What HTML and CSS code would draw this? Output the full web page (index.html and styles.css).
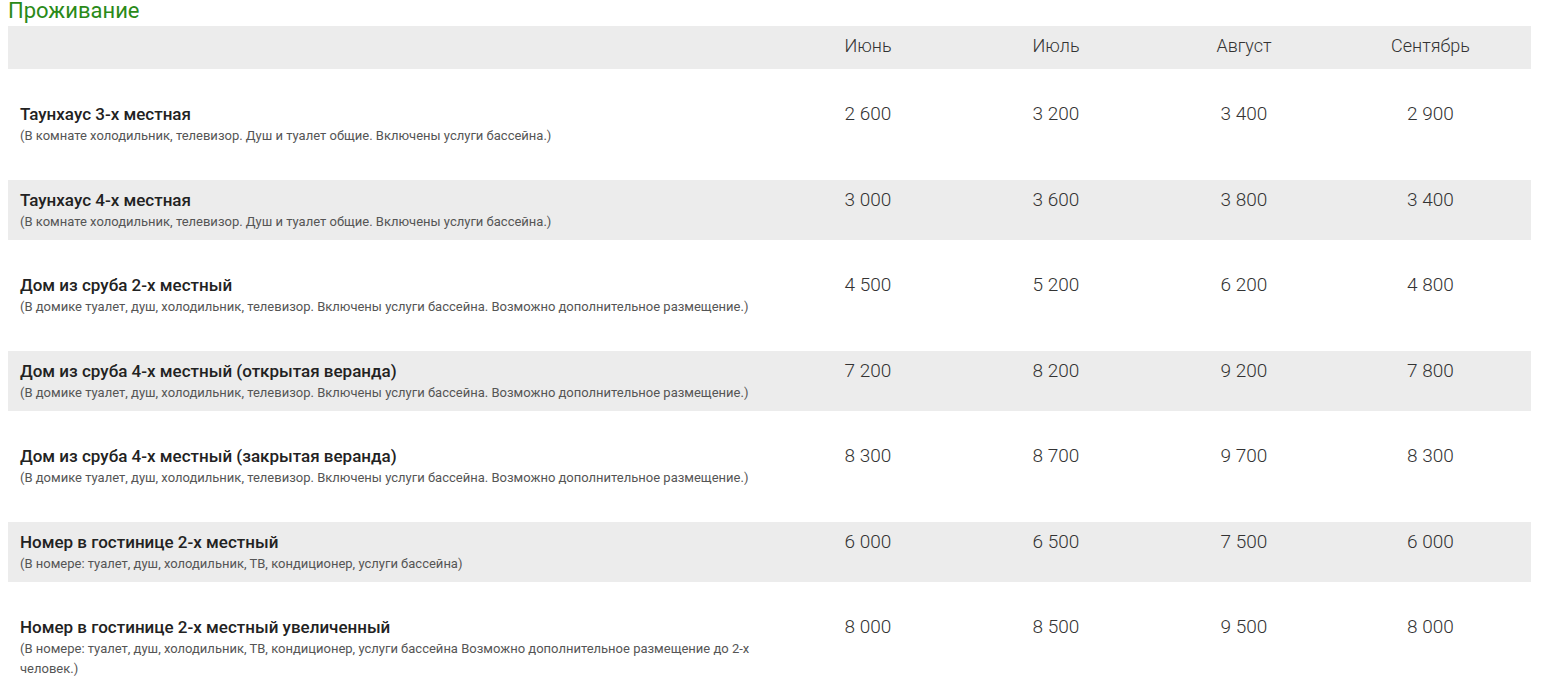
FILE: index.html
```html
<!DOCTYPE html>
<html lang="ru">
<head>
<meta charset="utf-8">
<title>Проживание</title>
<link rel="stylesheet" href="styles.css">
</head>
<body>
<h2 class="title">Проживание</h2>
<table class="prices">
  <colgroup>
    <col class="col-name">
    <col class="col-month">
    <col class="col-month">
    <col class="col-month">
    <col class="col-month-last">
  </colgroup>
  <thead>
    <tr>
      <th class="th-name"></th>
      <th>Июнь</th>
      <th>Июль</th>
      <th>Август</th>
      <th class="last">Сентябрь</th>
    </tr>
  </thead>
  <tbody>
    <tr class="row-light">
      <td class="name-cell"><div class="name">Таунхаус 3-х местная</div><div class="desc">(В комнате холодильник, телевизор. Душ и туалет общие. Включены услуги бассейна.)</div></td>
      <td>2 600</td><td>3 200</td><td>3 400</td><td class="last">2 900</td>
    </tr>
    <tr class="row-grey">
      <td class="name-cell"><div class="name">Таунхаус 4-х местная</div><div class="desc">(В комнате холодильник, телевизор. Душ и туалет общие. Включены услуги бассейна.)</div></td>
      <td>3 000</td><td>3 600</td><td>3 800</td><td class="last">3 400</td>
    </tr>
    <tr class="row-light">
      <td class="name-cell"><div class="name">Дом из сруба 2-х местный</div><div class="desc">(В домике туалет, душ, холодильник, телевизор. Включены услуги бассейна. Возможно дополнительное размещение.)</div></td>
      <td>4 500</td><td>5 200</td><td>6 200</td><td class="last">4 800</td>
    </tr>
    <tr class="row-grey">
      <td class="name-cell"><div class="name">Дом из сруба 4-х местный (открытая веранда)</div><div class="desc">(В домике туалет, душ, холодильник, телевизор. Включены услуги бассейна. Возможно дополнительное размещение.)</div></td>
      <td>7 200</td><td>8 200</td><td>9 200</td><td class="last">7 800</td>
    </tr>
    <tr class="row-light">
      <td class="name-cell"><div class="name">Дом из сруба 4-х местный (закрытая веранда)</div><div class="desc">(В домике туалет, душ, холодильник, телевизор. Включены услуги бассейна. Возможно дополнительное размещение.)</div></td>
      <td>8 300</td><td>8 700</td><td>9 700</td><td class="last">8 300</td>
    </tr>
    <tr class="row-grey">
      <td class="name-cell"><div class="name">Номер в гостинице 2-х местный</div><div class="desc">(В номере: туалет, душ, холодильник, ТВ, кондиционер, услуги бассейна)</div></td>
      <td>6 000</td><td>6 500</td><td>7 500</td><td class="last">6 000</td>
    </tr>
    <tr class="row-light">
      <td class="name-cell"><div class="name">Номер в гостинице 2-х местный увеличенный</div><div class="desc desc-wrap">(В номере: туалет, душ, холодильник, ТВ, кондиционер, услуги бассейна Возможно дополнительное размещение до 2-х человек.)</div></td>
      <td>8 000</td><td>8 500</td><td>9 500</td><td class="last">8 000</td>
    </tr>
  </tbody>
</table>
</body>
</html>
```
FILE: styles.css
```css
html, body {
  background: #ffffff;
}
body {
  margin: 0 8px;
  font-family: "Roboto", "Liberation Sans", sans-serif;
  color: #2b2b2b;
}
.title {
  margin: 0 0 5px 0;
  font-size: 22px;
  line-height: 21px;
  font-weight: 400;
  color: #2a8a18;
  height: 21px;
}
.prices {
  border-collapse: collapse;
  border-spacing: 0;
  width: 1523px;
  table-layout: fixed;
}
.col-name { width: 766px; }
.col-month { width: 188px; }
.col-month-last { width: 193px; }
.prices th {
  background: #ececec;
  height: 39px;
  padding: 0 0 4px 0;
  font-weight: 300;
  font-size: 18px;
  line-height: 22px;
  color: #333;
  text-align: center;
  vertical-align: middle;
}
.prices th.last, .prices td.last {
  padding-right: 8px;
}
.prices td {
  vertical-align: top;
  text-align: center;
  font-size: 19px;
  line-height: 24px;
  font-weight: 300;
  color: #333;
  padding: 0;
}
.prices td.name-cell {
  text-align: left;
  padding-left: 12px;
}
.row-grey td {
  background: #ececec;
  padding-top: 8px;
  padding-bottom: 8px;
}
.row-light td {
  background: #ffffff;
  padding-top: 33px;
  padding-bottom: 34px;
}
.name {
  font-size: 17px;
  line-height: 24px;
  font-weight: 500;
  color: #222;
}
.desc {
  font-size: 13px;
  line-height: 20px;
  font-weight: 400;
  color: #555;
}
.desc-wrap {
  max-width: 760px;
}
```
